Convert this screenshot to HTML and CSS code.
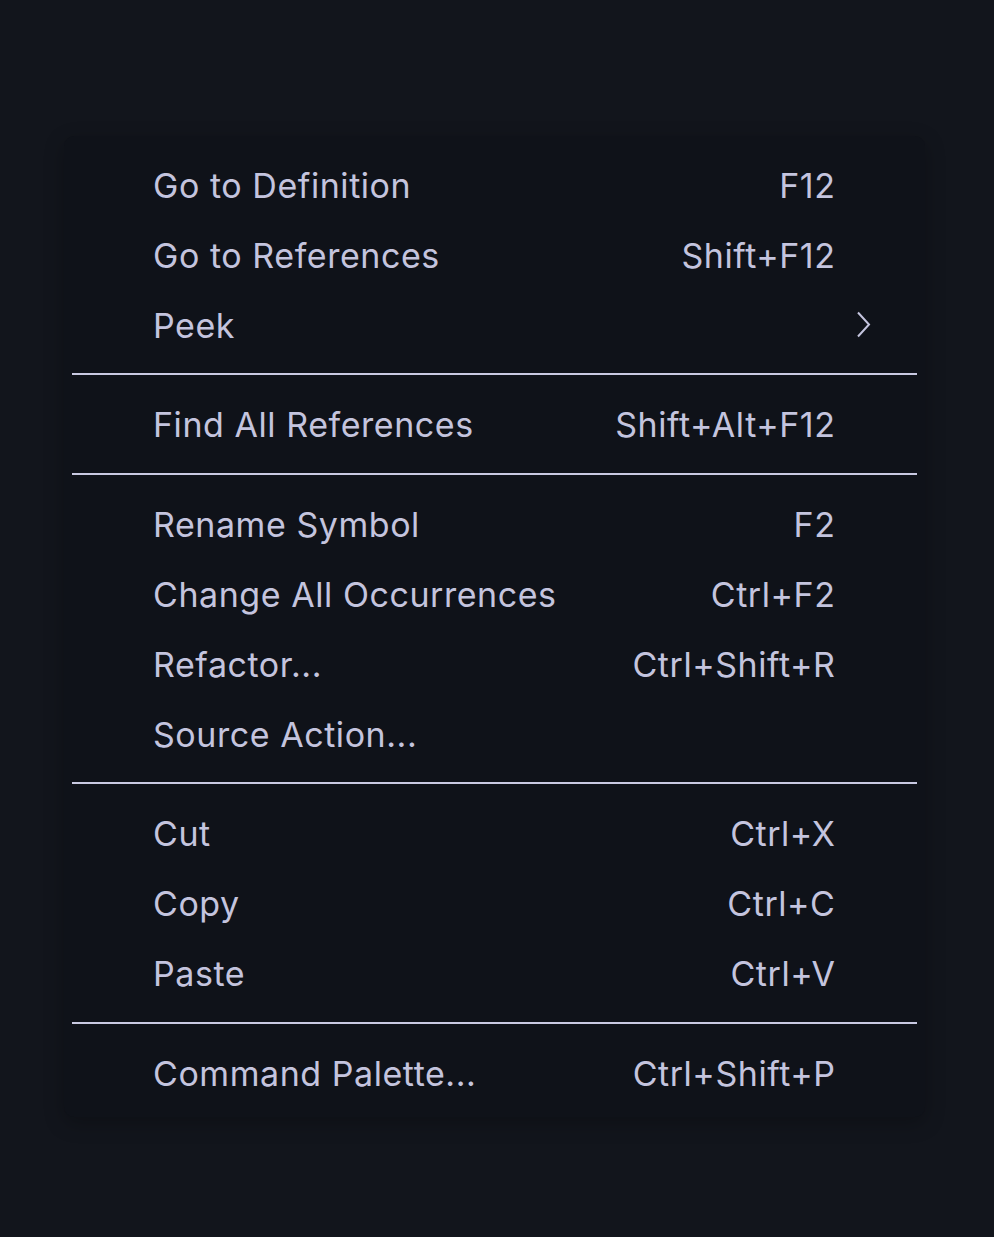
FILE: index.html
```html
<!DOCTYPE html>
<html>
<head>
<meta charset="utf-8">
<link rel="stylesheet" href="styles.css">
</head>
<body>
<div class="menu">
  <div class="item"><span class="label">Go to Definition</span><span class="key">F12</span></div>
  <div class="item"><span class="label">Go to References</span><span class="key">Shift+F12</span></div>
  <div class="item"><span class="label">Peek</span><span class="key"></span><svg class="chev" width="15" height="27" viewBox="0 0 15 27"><path d="M2 1.5 L13 13.5 L2 25.5" fill="none" stroke="currentColor" stroke-width="2"/></svg></div>
  <div class="sep"></div>
  <div class="item"><span class="label">Find All References</span><span class="key">Shift+Alt+F12</span></div>
  <div class="sep"></div>
  <div class="item"><span class="label">Rename Symbol</span><span class="key">F2</span></div>
  <div class="item"><span class="label">Change All Occurrences</span><span class="key">Ctrl+F2</span></div>
  <div class="item"><span class="label">Refactor...</span><span class="key">Ctrl+Shift+R</span></div>
  <div class="item"><span class="label">Source Action...</span><span class="key"></span></div>
  <div class="sep"></div>
  <div class="item"><span class="label">Cut</span><span class="key">Ctrl+X</span></div>
  <div class="item"><span class="label">Copy</span><span class="key">Ctrl+C</span></div>
  <div class="item"><span class="label">Paste</span><span class="key">Ctrl+V</span></div>
  <div class="sep"></div>
  <div class="item"><span class="label">Command Palette...</span><span class="key">Ctrl+Shift+P</span></div>
</div>
</body>
</html>
```

FILE: styles.css
```css
html, body {
  margin: 0;
  padding: 0;
  background: #12151c;
  height: 100%;
}
body {
  font-family: Inter, "Noto Sans", sans-serif;
  color: #c4c4de;
  padding: 136px 0 0 64px;
  box-sizing: border-box;
}
.menu {
  width: 861px;
  box-sizing: border-box;
  padding: 14px 8px 9px;
  background: #0f1219;
  border-radius: 10px;
  box-shadow: 0 6px 20px rgba(0, 0, 0, 0.25);
  display: flex;
  flex-direction: column;
}
.item {
  height: 70px;
  display: flex;
  align-items: center;
  padding: 0 82px 0 81px;
  position: relative;
  font-size: 34px;
  letter-spacing: 0.55px;
}
.label {
  flex: 1;
}
.key {
  text-align: right;
  margin-right: -0.5px;
}
.chev {
  position: absolute;
  right: 46px;
  top: 21px;
  color: #c4c4de;
}
.sep {
  height: 2px;
  background: #c9c9e2;
  margin: 13px 0 14.5px;
}
```
